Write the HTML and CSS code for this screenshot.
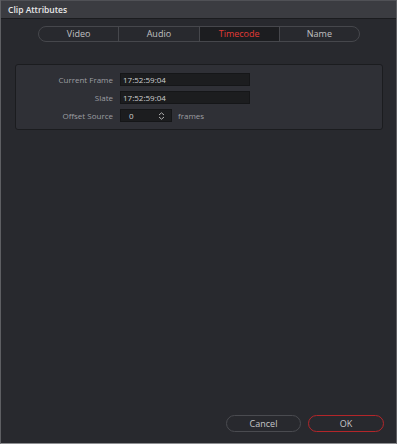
FILE: index.html
```html
<!DOCTYPE html>
<html lang="en">
<head>
    <meta charset="UTF-8">
    <title>Clip Attributes</title>
    <link rel="stylesheet" href="styles.css">
</head>
<body>
    <div class="window">
        <div class="titlebar">Clip Attributes</div>
        <div class="content">
            <div class="tabs">
                <div class="tab">Video</div>
                <div class="tab">Audio</div>
                <div class="tab active">Timecode</div>
                <div class="tab">Name</div>
            </div>

            <div class="panel">
                <div class="row">
                    <span class="label">Current Frame</span>
                    <div class="field">17:52:59:04</div>
                </div>
                <div class="row">
                    <span class="label">Slate</span>
                    <div class="field">17:52:59:04</div>
                </div>
                <div class="row">
                    <span class="label">Offset Source</span>
                    <div class="field spin">
                        <span>0</span>
                        <svg width="7" height="8" viewBox="0 0 7 8"><path d="M1 3 L3.5 0.8 L6 3 M1 5 L3.5 7.2 L6 5" fill="none" stroke="#b0b0b0" stroke-width="1"/></svg>
                    </div>
                    <span class="unit">frames</span>
                </div>
            </div>

            <div class="buttons">
                <button class="btn">Cancel</button>
                <button class="btn ok">OK</button>
            </div>
        </div>
    </div>
</body>
</html>
```

FILE: styles.css
```css
body {
    margin: 0;
    background-color: #28292e;
    font-family: "Open Sans", "Noto Sans", sans-serif;
}
.window {
    width: 397px;
    height: 444px;
    box-sizing: border-box;
    display: flex;
    flex-direction: column;
    background-color: #28292e;
    border-left: 1px solid #5e5f63;
    border-right: 1px solid #5e5f63;
    border-bottom: 1px solid #8e8f92;
}
.titlebar {
    height: 19px;
    box-sizing: border-box;
    line-height: 17px;
    padding-left: 7px;
    background-color: #3b3c41;
    border-top: 1px solid #505156;
    border-bottom: 1px solid #1b1c1f;
    color: #e8e8e8;
    font-size: 8.5px;
    font-weight: 600;
}
.content {
    flex: 1;
    display: flex;
    flex-direction: column;
}
.tabs {
    display: flex;
    width: 322px;
    height: 16px;
    box-sizing: border-box;
    margin: 7px 0 0 37px;
    border: 1px solid #46474c;
    border-radius: 8px;
    overflow: hidden;
}
.tab {
    flex: 1;
    text-align: center;
    font-size: 9px;
    line-height: 14px;
    color: #c0c0c2;
    border-left: 1px solid #46474c;
}
.tab:first-child {
    border-left: none;
}
.tab.active {
    background-color: #1c1d20;
    color: #e23a36;
}
.panel {
    margin: 22px 13px 0 14px;
    padding: 8px 0 7px 0;
    background-color: #2f3036;
    border: 1px solid #1b1c1f;
    border-radius: 3px;
    display: flex;
    flex-direction: column;
    gap: 5px;
}
.row {
    display: flex;
    align-items: center;
    height: 13px;
}
.label {
    width: 97px;
    text-align: right;
    margin-right: 7px;
    font-size: 8px;
    color: #9d9ea2;
}
.field {
    width: 130px;
    height: 13px;
    box-sizing: border-box;
    background-color: #1c1d1f;
    border: 1px solid #151618;
    padding-left: 2px;
    font-size: 8px;
    line-height: 11px;
    color: #cfcfd1;
}
.field.spin {
    width: 52px;
    display: flex;
    justify-content: space-between;
    align-items: center;
    padding-left: 8px;
    padding-right: 6px;
}
.unit {
    margin-left: 6px;
    font-size: 8px;
    color: #9d9ea2;
}
.buttons {
    margin-top: auto;
    margin-bottom: 11px;
    display: flex;
    justify-content: flex-end;
    gap: 7px;
    padding-right: 12px;
}
.btn {
    width: 75px;
    height: 17px;
    border-radius: 9px;
    border: 1px solid #4a4b50;
    background-color: transparent;
    color: #c6c6c8;
    font-family: "Open Sans", "Noto Sans", sans-serif;
    font-size: 9px;
    padding: 0;
}
.btn.ok {
    width: 76px;
    border-color: #b3262a;
}
```
